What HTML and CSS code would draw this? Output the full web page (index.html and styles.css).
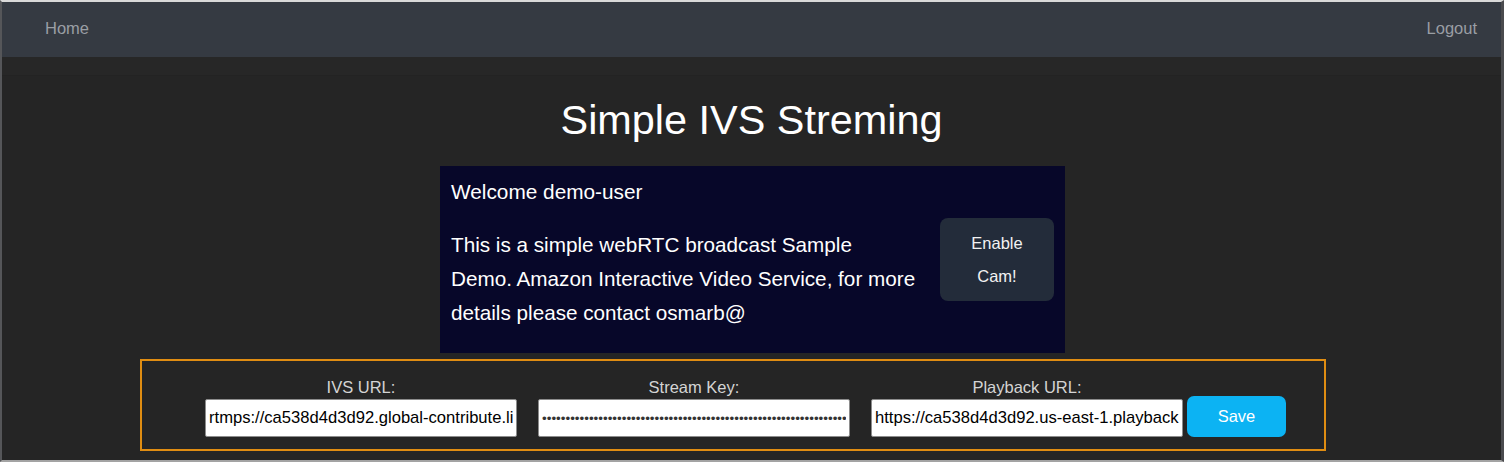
FILE: index.html
```html
<!DOCTYPE html>
<html lang="en">
<head>
<meta charset="utf-8">
<title>Simple IVS Streming</title>
<link rel="stylesheet" href="styles.css">
</head>
<body>
<div class="frame">
  <nav class="navbar">
    <a class="nav-link" href="#">Home</a>
    <a class="nav-link" href="#">Logout</a>
  </nav>
  <div class="nav-shadow"></div>
  <main class="page">
    <h1 class="title">Simple IVS Streming</h1>
    <section class="welcome">
      <div class="welcome-text">
        <p class="greeting">Welcome demo-user</p>
        <p class="intro">This is a simple webRTC broadcast Sample Demo. Amazon Interactive Video Service, for more details please contact osmarb@</p>
      </div>
      <button class="cam-btn" type="button">Enable Cam!</button>
    </section>
    <form class="config">
      <div class="field">
        <label class="field-label" for="ivs-url">IVS URL:</label>
        <input class="field-input" id="ivs-url" type="text" value="rtmps://ca538d4d3d92.global-contribute.live-video.net:443/app/">
      </div>
      <div class="field">
        <label class="field-label" for="stream-key">Stream Key:</label>
        <input class="field-input field-secret" id="stream-key" type="password" value="sk_us-east-1_abcdefghijklmnopqrstuvwxyz0123456789ABCDEFGHIJKLMNOPQRSTUVWXYZ">
      </div>
      <div class="field">
        <label class="field-label" for="playback-url">Playback URL:</label>
        <input class="field-input" id="playback-url" type="text" value="https://ca538d4d3d92.us-east-1.playback.live-video.net/api/video/v1/">
      </div>
      <button class="save-btn" type="button">Save</button>
    </form>
  </main>
</div>
</body>
</html>
```

FILE: styles.css
```css
html, body {
  margin: 0;
  padding: 0;
  background: #252525;
}

body {
  font-family: "Liberation Sans", Arial, Helvetica, sans-serif;
}

.frame {
  height: 462px;
  box-sizing: border-box;
  border-top: 2px solid #d9d9d9;
  border-left: 2px solid #555659;
  border-right: 3px solid #4a4b4e;
  border-bottom: 2px solid #a3a3a3;
  overflow: hidden;
  background: #252525;
}

.navbar {
  height: 55px;
  box-sizing: border-box;
  background: #353a42;
  display: flex;
  align-items: center;
  justify-content: space-between;
  padding: 0 24px 4px 43px;
}

.nav-link {
  color: #9a9ea4;
  text-decoration: none;
  font-size: 16.5px;
  line-height: 20px;
}

.nav-shadow {
  height: 18px;
  background: #272727;
  border-bottom: 1px solid #232323;
}

.page {
  display: flex;
  flex-direction: column;
}

.title {
  margin: 20px 0 0;
  text-align: center;
  color: #ffffff;
  font-weight: normal;
  font-size: 41.4px;
  line-height: 48px;
}

.welcome {
  width: 625px;
  height: 187px;
  box-sizing: border-box;
  margin: 22px 0 0 438px;
  background: #070729;
  display: flex;
  justify-content: space-between;
  align-items: center;
  padding: 0 11px;
  color: #ffffff;
}

.welcome-text {
  align-self: flex-start;
  width: 467.5px;
  padding-top: 9px;
}

.greeting {
  margin: 0 0 19px;
  font-size: 20.8px;
  line-height: 34px;
}

.intro {
  margin: 0;
  font-size: 20.7px;
  line-height: 34px;
}

.cam-btn {
  width: 114px;
  height: 83px;
  box-sizing: border-box;
  padding: 0 16px;
  border: none;
  border-radius: 8px;
  background: #232c3a;
  color: #f2f2f2;
  font-family: inherit;
  font-size: 16.5px;
  line-height: 33px;
}

.config {
  margin: 6px 0 0 138px;
  width: 1186px;
  height: 92px;
  box-sizing: border-box;
  border: 2px solid #e08d12;
  display: flex;
  align-items: flex-end;
  padding: 0 0 12px 63px;
}

.field {
  width: 312px;
  display: flex;
  flex-direction: column;
}

.field + .field {
  margin-left: 21px;
}

.field-label {
  text-align: center;
  color: #d4d4d4;
  font-size: 16.5px;
  line-height: 19px;
  margin-bottom: 2px;
}

.field-input {
  width: 100%;
  height: 38px;
  box-sizing: border-box;
  margin: 0;
  padding: 0 3px;
  border: 1px solid #8c8c8c;
  border-radius: 2px;
  background: #ffffff;
  color: #000000;
  font-family: inherit;
  font-size: 16.6px;
}

.field-secret {
  font-size: 13.4px;
  color: #333333;
}

.save-btn {
  margin-left: 4px;
  width: 99px;
  height: 41px;
  border: none;
  border-radius: 7px;
  background: #0cb3f3;
  color: #ffffff;
  font-family: inherit;
  font-size: 16.5px;
}
```
